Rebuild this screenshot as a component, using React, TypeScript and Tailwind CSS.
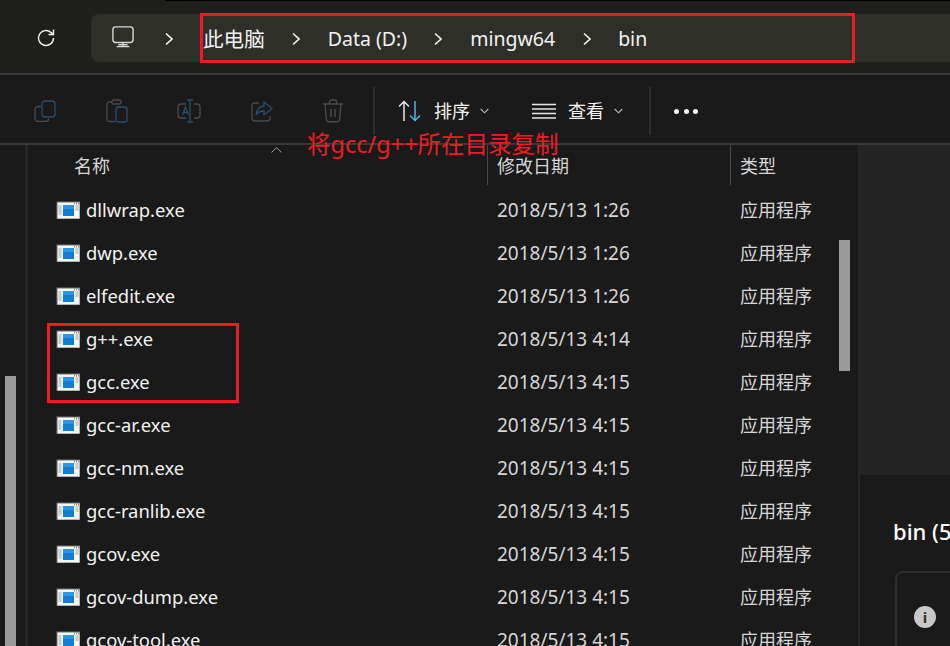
const files = [
  { name: 'dllwrap.exe', date: '2018/5/13 1:26' },
  { name: 'dwp.exe', date: '2018/5/13 1:26' },
  { name: 'elfedit.exe', date: '2018/5/13 1:26' },
  { name: 'g++.exe', date: '2018/5/13 4:14' },
  { name: 'gcc.exe', date: '2018/5/13 4:15' },
  { name: 'gcc-ar.exe', date: '2018/5/13 4:15' },
  { name: 'gcc-nm.exe', date: '2018/5/13 4:15' },
  { name: 'gcc-ranlib.exe', date: '2018/5/13 4:15' },
  { name: 'gcov.exe', date: '2018/5/13 4:15' },
  { name: 'gcov-dump.exe', date: '2018/5/13 4:15' },
  { name: 'gcov-tool.exe', date: '2018/5/13 4:15' },
]

function Chevron({ className = '' }: { className?: string }) {
  return (
    <svg width="8" height="14" viewBox="0 0 8 14" fill="none" stroke="#f2f2f2" strokeWidth="1.6" className={className}>
      <path d="M1 1.5 7 7l-6 5.5" />
    </svg>
  )
}

function SmallDown({ className = '' }: { className?: string }) {
  return (
    <svg width="9" height="6" viewBox="0 0 9 6" fill="none" stroke="#b5b5b5" strokeWidth="1.1" className={className}>
      <path d="M.7 1 4.5 4.8 8.3 1" />
    </svg>
  )
}

function ExeIcon() {
  return (
    <svg width="24" height="18" viewBox="0 0 24 18" className="shrink-0">
      <rect x="1" y="1" width="23" height="17" fill="#f6f6f6" stroke="#707070" />
      <rect x="7" y="4" width="11" height="11" fill="#0f7fd6" />
      <rect x="7" y="4" width="11" height="4" fill="#2a97e6" />
      <path d="M2.500 5h3M2.500 7h3M2.500 9h3M2.500 11h3M2.500 13h3M19.500 5h3M19.500 7h3M19.500 9h3" stroke="#a0a0a0" strokeWidth="1" />
      <path d="M18 2.500h1M20 2.500h1M22 2.500h1" stroke="#8a8a8a" strokeWidth="2" />
    </svg>
  )
}

function ToolbarIcons() {
  return (
    <div className="flex items-center gap-[49.5px] pl-[34px]">
      <svg width="22" height="22" viewBox="0 0 22 22" fill="none" strokeWidth="1.3">
        <path d="M7 6.500H4.500A3.500 3.500 0 0 0 1 10v8a3.500 3.500 0 0 0 3.500 3.500h7A3.500 3.500 0 0 0 15 18.500" stroke="#4a4a4a" />
        <rect x="8" y="1" width="13" height="16" rx="3" stroke="#24506b" />
      </svg>
      <svg width="22" height="24" viewBox="0 0 22 24" fill="none" strokeWidth="1.3">
        <path d="M6 3H3.500A2.500 2.500 0 0 0 1 5.500V20a2.500 2.500 0 0 0 2.500 2.500H9M16 3h-1" stroke="#4a4a4a" />
        <rect x="6" y="1" width="9" height="4" rx="1.500" stroke="#4a4a4a" />
        <rect x="10" y="8" width="11" height="15" rx="2.500" stroke="#24506b" />
      </svg>
      <svg width="24" height="24" viewBox="0 0 24 24" fill="none" strokeWidth="1.3">
        <path d="M9 5H4a3 3 0 0 0-3 3v8a3 3 0 0 0 3 3h5M17 5h3a3 3 0 0 1 3 3v8a3 3 0 0 1-3 3h-3" stroke="#4a4a4a" />
        <path d="M10 1h6M10 23h6M13 1v22M5.500 16 8.500 8l3 8M6.500 13.500h4" stroke="#24506b" />
      </svg>
      <svg width="22" height="22" viewBox="0 0 22 22" fill="none" strokeWidth="1.3">
        <path d="M8 3H4a3 3 0 0 0-3 3v12a3 3 0 0 0 3 3h12a3 3 0 0 0 3-3v-2" stroke="#4a4a4a" />
        <path d="M13 2l8 6.500-8 6.500v-4c-3.500 0-6 1-8 4 .5-5 3.500-8.500 8-9z" stroke="#24506b" />
      </svg>
      <svg width="22" height="24" viewBox="0 0 22 24" fill="none" stroke="#4a4a4a" strokeWidth="1.4">
        <path d="M1 5h20M7.500 5V3a2 2 0 0 1 2-2h3a2 2 0 0 1 2 2v2M3 5l1.500 16a2 2 0 0 0 2 1.800h9a2 2 0 0 0 2-1.800L19 5M9 10v8M13 10v8" />
      </svg>
    </div>
  )
}

export default function App() {
  return (
    <div
      className="relative flex h-[646px] w-[950px] flex-col overflow-hidden bg-[#1a1a1a] text-[18.4px] text-[#f2f2f2]"
      style={{ fontFamily: '"Noto Sans", "Noto Sans CJK SC", sans-serif' }}
    >
      {/* Address row */}
      <div className="relative flex h-[73px] shrink-0 items-start bg-[#1f1f1b]">
        <div className="absolute right-0 top-0 h-px w-[785px] bg-black" />
        <svg width="20" height="20" viewBox="0 0 20 20" fill="none" stroke="#f0f0f0" strokeWidth="1.4" className="ml-[36px] mt-[28px]">
          <path d="M17.500 10A7.500 7.500 0 1 1 15 4.400L17.500 6.500M17.500 1.500v5h-5" />
        </svg>
        <div className="ml-[35px] mt-[14px] flex h-[48px] flex-1 items-center rounded-l-lg bg-[#2f2f29] pt-[2px] text-[19.5px]">
          <svg width="22" height="22" viewBox="0 0 24 24" fill="none" stroke="#d8d8d8" strokeWidth="1.500" className="ml-[21px] -mt-[4px]">
            <rect x="1" y="1" width="22" height="17" rx="3" />
            <path d="M12 18v4M5 22.500h14M7 20.500h10" />
          </svg>
          <Chevron className="ml-[31px]" />
          <span className="ml-[30px] text-[20.6px]">此电脑</span>
          <Chevron className="ml-[27px]" />
          <span className="ml-[28px]">Data (D:)</span>
          <Chevron className="ml-[27px]" />
          <span className="ml-[28px]">mingw64</span>
          <Chevron className="ml-[28px]" />
          <span className="ml-[27px]">bin</span>
        </div>
      </div>
      <div className="h-[2px] shrink-0 bg-[#383838]" />

      {/* Command bar */}
      <div className="flex h-[68px] shrink-0 items-center bg-[#1a1a1a] pt-[4px] text-[18px]">
        <ToolbarIcons />
        <div className="ml-[29px] h-[48px] w-[2px] bg-[#2e2e2e]" />
        <svg width="24" height="22" viewBox="0 0 24 22" fill="none" strokeWidth="1.500" className="ml-[23px]">
          <path d="M6 21V1.500M1 6.500l5-5 5 5" stroke="#e8e8e8" />
          <path d="M17 1v19.500M12 15.500l5 5 5-5" stroke="#4cb5ef" />
        </svg>
        <span className="ml-[12px]">排序</span>
        <SmallDown className="ml-[10px]" />
        <svg width="24" height="16" viewBox="0 0 24 16" stroke="#e8e8e8" strokeWidth="1.300" className="ml-[43px]">
          <path d="M0 1.500h24M0 6h24M0 10.500h24M0 15h24" />
        </svg>
        <span className="ml-[12px]">查看</span>
        <SmallDown className="ml-[10px]" />
        <div className="ml-[26px] h-[48px] w-[2px] bg-[#2e2e2e]" />
        <div className="ml-[23px] flex gap-[4.5px]">
          <span className="size-[5px] rounded-full bg-[#f5f5f5]" />
          <span className="size-[5px] rounded-full bg-[#f5f5f5]" />
          <span className="size-[5px] rounded-full bg-[#f5f5f5]" />
        </div>
      </div>
      <div className="h-[2px] shrink-0 bg-[#383838]" />

      {/* Body */}
      <div className="flex min-h-0 flex-1">
        <div className="relative w-[28px] shrink-0 border-r-[3px] border-[#262626]">
          <div className="absolute left-[5px] top-[231px] h-[300px] w-[11px] bg-[#9a9a9a]" />
        </div>

        <div className="relative w-[830px] shrink-0">
          <div className="flex h-[44px] items-start text-[18px] text-[#d6d6d6]">
            <span className="ml-[46px] w-[413px] pt-[8px]">名称</span>
            <svg width="11" height="6" viewBox="0 0 11 6" fill="none" stroke="#9c9c9c" strokeWidth="1" className="absolute left-[243px] top-[2px]">
              <path d="M.5 5.500 5.500.7l5 4.800" />
            </svg>
            <div className="h-[40px] w-px bg-[#4a4a4a]" />
            <span className="ml-[9px] w-[233px] pt-[8px]">修改日期</span>
            <div className="h-[40px] w-px bg-[#4a4a4a]" />
            <span className="ml-[9px] pt-[8px]">类型</span>
          </div>
          {files.map((f) => (
            <div key={f.name} className="flex h-[43px] items-center">
              <div className="ml-[28px] flex w-[441px] items-center gap-[6px]">
                <ExeIcon />
                <span className="-mt-[2px]">{f.name}</span>
              </div>
              <span className="w-[243px] text-[19px] text-[#d6d6d6]">{f.date}</span>
              <span className="text-[18px] text-[#d6d6d6]">应用程序</span>
            </div>
          ))}
          <div className="absolute left-[811px] top-[95px] h-[131px] w-[11px] bg-[#9a9a9a]" />
        </div>

        <div className="flex min-w-0 flex-1 flex-col border-l-[2px] border-[#262626]">
          <div className="h-[330px] shrink-0 bg-[#242424]" />
          <div className="flex-1 pl-[33px]">
            <div className="whitespace-nowrap pt-[41px] text-[22px] font-medium leading-[30px] text-white">bin (5</div>
            <div className="ml-[2px] mt-[25px] flex h-[80px] items-start rounded-tl-lg border-l-[2px] border-t-[2px] border-[#2c2c2c] pl-[17px] pt-[33px]">
              <div className="flex size-[22px] items-center justify-center rounded-full bg-[#c8c8c8] text-[15px] font-bold leading-none text-[#333]">i</div>
            </div>
          </div>
        </div>
      </div>

      {/* Annotations */}
      <div className="absolute left-[200px] top-[13px] h-[50px] w-[655px] border-[3px] border-[#ed1c24]" />
      <div className="absolute left-[47px] top-[323px] h-[80px] w-[192px] border-[3px] border-[#ed1c24]" />
      <div className="absolute left-[307px] top-[128px] text-[23.5px] leading-[32px] text-[#ed1c24]">将gcc/g++所在目录复制</div>
    </div>
  )
}
